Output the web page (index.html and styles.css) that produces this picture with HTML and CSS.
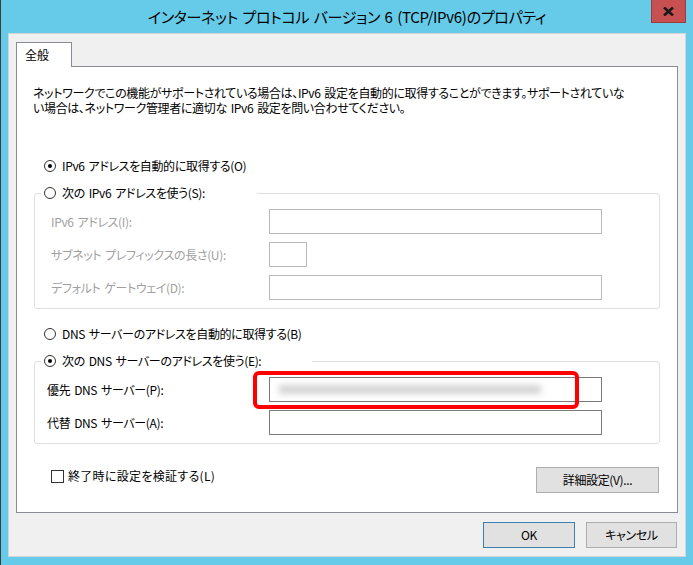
FILE: index.html
```html
<!doctype html>
<html lang="ja">
<head>
    <meta charset="UTF-8">
    <title>インターネット プロトコル バージョン 6 (TCP/IPv6)のプロパティ</title>
    <link rel="stylesheet" href="styles.css">
</head>
<body>

<div class="window">
    <div class="titlebar">
        <span class="title">インターネット プロトコル バージョン 6 (TCP/IPv6)のプロパティ</span>
        <button class="close">
            <svg width="11" height="9" viewBox="0 0 11 9">
                <path d="M1 0.5 L10 8.5 M10 0.5 L1 8.5" stroke="#1a1a1a" stroke-width="2.6"/>
            </svg>
        </button>
    </div>

    <div class="client">
        <div class="tabs">
            <div class="tab">全般</div>
        </div>

        <div class="panel">
            <p class="desc">
                <span class="desc-line">ネットワークでこの機能がサポートされている場合は、IPv6 設定を自動的に取得することができます。サポートされていな</span>
                <span class="desc-line">い場合は、ネットワーク管理者に適切な IPv6 設定を問い合わせてください。</span>
            </p>

            <div class="radio-row first">
                <span class="radio checked"></span>IPv6 アドレスを自動的に取得する(O)
            </div>

            <fieldset class="group">
                <legend class="legend-ip">
                    <span class="radio-line"><span class="radio"></span>次の IPv6 アドレスを使う(S):</span>
                </legend>
                <div class="form-grid disabled">
                    <span class="field-label">IPv6 アドレス(I):</span>
                    <div class="field"></div>
                    <span class="field-label">サブネット プレフィックスの長さ(U):</span>
                    <div class="field short"></div>
                    <span class="field-label">デフォルト ゲートウェイ(D):</span>
                    <div class="field"></div>
                </div>
            </fieldset>

            <div class="radio-row dns-auto">
                <span class="radio"></span>DNS サーバーのアドレスを自動的に取得する(B)
            </div>

            <fieldset class="group">
                <legend class="legend-dns">
                    <span class="radio-line"><span class="radio checked"></span>次の DNS サーバーのアドレスを使う(E):</span>
                </legend>
                <div class="form-grid dns">
                    <span class="field-label">優先 DNS サーバー(P):</span>
                    <div class="field marked">
                        <span class="blurred"></span>
                        <div class="highlight"></div>
                    </div>
                    <span class="field-label">代替 DNS サーバー(A):</span>
                    <div class="field"></div>
                </div>
            </fieldset>

            <div class="bottom-row">
                <div class="check-row"><span class="check"></span>終了時に設定を検証する(L)</div>
                <button class="btn advanced">詳細設定(V)...</button>
            </div>
        </div>

        <div class="footer">
            <button class="btn ok">OK</button>
            <button class="btn cancel">キャンセル</button>
        </div>
    </div>
</div>

</body>
</html>
```

FILE: styles.css
```css
body {
    margin: 0;
    width: 693px;
    height: 565px;
    overflow: hidden;
    font: 12px/16px "Noto Sans CJK JP", sans-serif;
    font-feature-settings: "palt";
    letter-spacing: -0.35px;
    word-spacing: 1.5px;
    color: #000;
}

.window {
    position: relative;
    height: 565px;
    box-sizing: border-box;
    background: #65cbe9;
    border-left: 1px solid #3d3d3d;
    padding: 0 7px 8px 7px;
}

.titlebar {
    height: 33px;
    display: flex;
    align-items: center;
    justify-content: center;
    font-size: 15px;
    letter-spacing: -0.3px;
}

.close {
    position: absolute;
    top: 0;
    right: 7px;
    width: 35px;
    height: 23px;
    padding: 0;
    background: #c75050;
    border: 1px solid #9b3d3d;
    border-top: none;
    display: flex;
    align-items: center;
    justify-content: center;
}

.client {
    height: 524px;
    box-sizing: border-box;
    background: #f0f0f0;
    border: 1px solid #d3d6d8;
    padding: 8px 7px 0;
}

.tabs {
    display: flex;
    margin-bottom: -1px;
}

.tab {
    position: relative;
    z-index: 1;
    width: 56px;
    height: 25px;
    box-sizing: border-box;
    background: #fff;
    border: 1px solid #898c95;
    border-bottom: none;
    padding: 4px 0 0 8px;
    letter-spacing: 0;
}

.panel {
    background: #fff;
    border: 1px solid #898c95;
    padding: 18px 17px 19px 17px;
}

.desc {
    margin: 0 0 0 -1px;
}

.desc-line {
    display: block;
    height: 15px;
    line-height: 15px;
    white-space: nowrap;
}

.radio-row,
.radio-line {
    display: flex;
    align-items: center;
    gap: 6px;
    height: 16px;
    white-space: nowrap;
}

.radio-row {
    padding-left: 10px;
}

.radio-row.first {
    margin-top: 43px;
}

.radio-row.dns-auto {
    margin-top: 17px;
}

.radio {
    position: relative;
    flex: none;
    width: 12px;
    height: 12px;
    box-sizing: border-box;
    border: 1px solid #333;
    border-radius: 50%;
    background: #fff;
}

.radio.checked::after {
    content: "";
    position: absolute;
    inset: 3px;
    border-radius: 50%;
    background: #000;
}

.group {
    margin: 11px 0 0;
    padding: 8px 0;
    min-width: 0;
    border: 1px solid #dcdfe3;
    border-radius: 3px;
}

.group legend {
    margin-left: 6px;
    padding: 0 0 0 3px;
    box-sizing: border-box;
}

.legend-ip {
    width: 216px;
}

.legend-dns {
    width: 271px;
}

.form-grid {
    display: grid;
    grid-template-columns: 218px 333px;
    row-gap: 8px;
    align-items: center;
    padding-left: 16px;
}

.form-grid.dns {
    grid-template-columns: 222px 333px;
    padding-left: 12px;
}

.field-label {
    white-space: nowrap;
}

.disabled .field-label {
    color: #a0a0a0;
}

.field {
    height: 25px;
    box-sizing: border-box;
    border: 1px solid #7a7a7a;
    background: #fff;
}

.disabled .field {
    border-color: #b9b9b9;
}

.field.short {
    width: 38px;
}

.field.marked {
    position: relative;
}

.blurred {
    display: block;
    width: 262px;
    height: 9px;
    margin: 7px 0 0 9px;
    background: #d3d3d3;
    filter: blur(3px);
}

.highlight {
    position: absolute;
    left: -17px;
    top: -7px;
    width: 326px;
    height: 38px;
    box-sizing: border-box;
    border: 4px solid #ff0000;
    border-radius: 6px;
}

.bottom-row {
    display: flex;
    justify-content: space-between;
    align-items: flex-start;
    margin-top: 23px;
    padding-right: 1px;
}

.check-row {
    display: flex;
    align-items: center;
    gap: 4px;
    height: 16px;
    margin-top: 1px;
    padding-left: 17px;
    letter-spacing: 0.3px;
}

.check {
    width: 13px;
    height: 13px;
    box-sizing: border-box;
    border: 1px solid #333;
    background: #fff;
}

.btn {
    height: 26px;
    padding: 0;
    font: inherit;
    letter-spacing: inherit;
    color: #000;
    background: #e1e1e1;
    border: 1px solid #adadad;
}

.advanced {
    width: 123px;
}

.footer {
    display: flex;
    justify-content: flex-end;
    gap: 11px;
    margin-top: 9px;
    padding-right: 1px;
}

.ok {
    width: 92px;
    border-color: #3c7fb1;
}

.cancel {
    width: 91px;
}
```
